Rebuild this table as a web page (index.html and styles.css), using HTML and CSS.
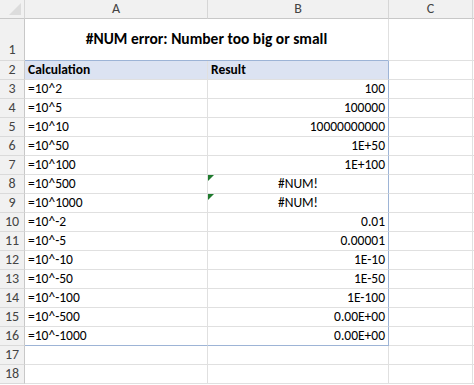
FILE: index.html
```html
<!DOCTYPE html>
<html>
<head>
  <title>#NUM error</title>
  <link rel="stylesheet" href="styles.css">
</head>
<body>
  <div class="sheet">
    <div class="row head">
      <div class="cell corner"><span class="select-all"></span></div>
      <div class="cell col">A</div>
      <div class="cell col">B</div>
      <div class="cell col">C</div>
      <div class="cell col"></div>
    </div>

    <div class="row tall">
      <div class="cell num">1</div>
      <div class="cell title">#NUM error: Number too big or small</div>
      <div class="cell"></div>
      <div class="cell"></div>
    </div>

    <div class="row">
      <div class="cell num">2</div>
      <div class="cell th">Calculation</div>
      <div class="cell th last">Result</div>
      <div class="cell"></div>
      <div class="cell"></div>
    </div>
    <div class="row">
      <div class="cell num">3</div>
      <div class="cell">=10^2</div>
      <div class="cell right last">100</div>
      <div class="cell"></div><div class="cell"></div>
    </div>
    <div class="row">
      <div class="cell num">4</div>
      <div class="cell">=10^5</div>
      <div class="cell right last">100000</div>
      <div class="cell"></div><div class="cell"></div>
    </div>
    <div class="row">
      <div class="cell num">5</div>
      <div class="cell">=10^10</div>
      <div class="cell right last">10000000000</div>
      <div class="cell"></div><div class="cell"></div>
    </div>
    <div class="row">
      <div class="cell num">6</div>
      <div class="cell">=10^50</div>
      <div class="cell right last">1E+50</div>
      <div class="cell"></div><div class="cell"></div>
    </div>
    <div class="row">
      <div class="cell num">7</div>
      <div class="cell">=10^100</div>
      <div class="cell right last">1E+100</div>
      <div class="cell"></div><div class="cell"></div>
    </div>
    <div class="row">
      <div class="cell num">8</div>
      <div class="cell">=10^500</div>
      <div class="cell center last"><span class="flag"></span>#NUM!</div>
      <div class="cell"></div><div class="cell"></div>
    </div>
    <div class="row">
      <div class="cell num">9</div>
      <div class="cell">=10^1000</div>
      <div class="cell center last"><span class="flag"></span>#NUM!</div>
      <div class="cell"></div><div class="cell"></div>
    </div>
    <div class="row">
      <div class="cell num">10</div>
      <div class="cell">=10^-2</div>
      <div class="cell right last">0.01</div>
      <div class="cell"></div><div class="cell"></div>
    </div>
    <div class="row">
      <div class="cell num">11</div>
      <div class="cell">=10^-5</div>
      <div class="cell right last">0.00001</div>
      <div class="cell"></div><div class="cell"></div>
    </div>
    <div class="row">
      <div class="cell num">12</div>
      <div class="cell">=10^-10</div>
      <div class="cell right last">1E-10</div>
      <div class="cell"></div><div class="cell"></div>
    </div>
    <div class="row">
      <div class="cell num">13</div>
      <div class="cell">=10^-50</div>
      <div class="cell right last">1E-50</div>
      <div class="cell"></div><div class="cell"></div>
    </div>
    <div class="row">
      <div class="cell num">14</div>
      <div class="cell">=10^-100</div>
      <div class="cell right last">1E-100</div>
      <div class="cell"></div><div class="cell"></div>
    </div>
    <div class="row">
      <div class="cell num">15</div>
      <div class="cell">=10^-500</div>
      <div class="cell right last">0.00E+00</div>
      <div class="cell"></div><div class="cell"></div>
    </div>
    <div class="row end">
      <div class="cell num">16</div>
      <div class="cell">=10^-1000</div>
      <div class="cell right last">0.00E+00</div>
      <div class="cell"></div><div class="cell"></div>
    </div>
    <div class="row">
      <div class="cell num">17</div>
      <div class="cell"></div><div class="cell"></div><div class="cell"></div><div class="cell"></div>
    </div>
    <div class="row">
      <div class="cell num">18</div>
      <div class="cell"></div><div class="cell"></div><div class="cell"></div><div class="cell"></div>
    </div>
  </div>
</body>
</html>
```

FILE: styles.css
```css
body {
  margin: 0;
  background: #fff;
  font-family: Carlito, Lato, "Open Sans", sans-serif;
  font-size: 13.5px;
  color: #000;
  overflow: hidden;
}
.sheet {
  width: 474px;
  height: 385px;
  overflow: hidden;
}
.row {
  display: grid;
  grid-template-columns: 25px 183px 181px 84px 1fr;
  height: 19px;
}
.row.tall { height: 42px; }
.cell {
  box-sizing: border-box;
  position: relative;
  border-right: 1px solid #e0e0e0;
  border-bottom: 1px solid #e0e0e0;
  padding: 0 3px;
  line-height: 18px;
  white-space: nowrap;
  overflow: hidden;
}
.head .cell {
  background: #f1f1f1;
  border-right-color: #d6d6d6;
  border-bottom-color: #c8c8c8;
  color: #444;
  text-align: center;
  font-size: 14px;
}
.corner { padding: 0; }
.select-all {
  position: absolute;
  right: 3px;
  bottom: 3px;
  width: 0;
  height: 0;
  border-left: 12px solid transparent;
  border-bottom: 12px solid #dcdcdc;
}
.cell.num {
  background: #f1f1f1;
  border-right-color: #c8c8c8;
  border-bottom-color: #dadada;
  color: #444;
  text-align: center;
  font-size: 14px;
  padding: 0;
}
.tall .num { line-height: 20px; padding-top: 21px; }
.title {
  grid-column: span 2;
  text-align: center;
  font-weight: bold;
  font-size: 15.5px;
  line-height: 40px;
  border-bottom-color: #9db4d6;
}
.th {
  background: #dce3f2;
  font-weight: bold;
}
.right { text-align: right; }
.center { text-align: center; }
.cell.last { border-right-color: #9db4d6; }
.end .cell:nth-child(2),
.end .cell:nth-child(3) { border-bottom-color: #9db4d6; }
.flag {
  position: absolute;
  left: 0;
  top: 0;
  width: 0;
  height: 0;
  border-top: 6px solid #1f7a2e;
  border-right: 6px solid transparent;
}
```
